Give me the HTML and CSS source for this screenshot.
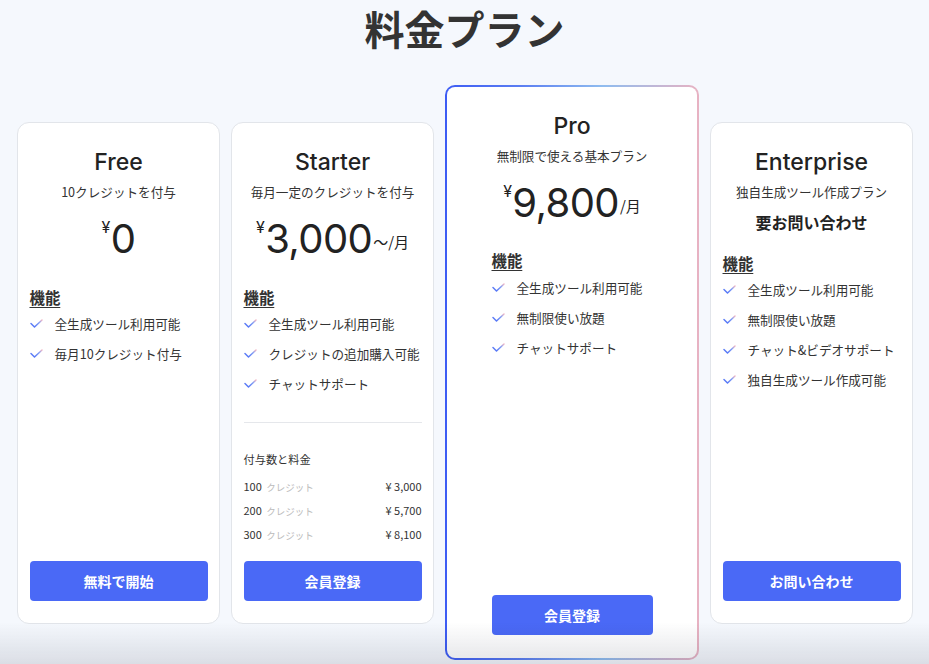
FILE: index.html
```html
<!DOCTYPE html>
<html lang="ja">
<head>
  <meta charset="UTF-8" />
  <meta name="viewport" content="width=device-width, initial-scale=1" />
  <title>料金プラン</title>
  <link rel="stylesheet" href="styles.css">
</head>
<body>
  <svg width="0" height="0" class="defs">
    <defs>
      <linearGradient id="checkGrad" x1="0" y1="1" x2="1" y2="0">
        <stop offset="0%" stop-color="#4a6cf7" />
        <stop offset="65%" stop-color="#7f9cf5" />
        <stop offset="100%" stop-color="#f0b6c4" />
      </linearGradient>
    </defs>
  </svg>

  <h1 class="page-title">料金プラン</h1>

  <div class="plans">
    <div class="card">
      <div class="plan-name">Free</div>
      <div class="plan-desc">10クレジットを付与</div>
      <div class="price"><span class="yen">¥</span>0</div>
      <div class="feat-title">機能</div>
      <ul class="features">
        <li><svg class="check" viewBox="0 0 13 9"><path d="M1 4.5 L4.5 8 L12 1" /></svg>全生成ツール利用可能</li>
        <li><svg class="check" viewBox="0 0 13 9"><path d="M1 4.5 L4.5 8 L12 1" /></svg>毎月10クレジット付与</li>
      </ul>
      <button class="btn">無料で開始</button>
    </div>

    <div class="card">
      <div class="plan-name">Starter</div>
      <div class="plan-desc">毎月一定のクレジットを付与</div>
      <div class="price"><span class="yen">¥</span>3,000<span class="unit">〜/月</span></div>
      <div class="feat-title">機能</div>
      <ul class="features">
        <li><svg class="check" viewBox="0 0 13 9"><path d="M1 4.5 L4.5 8 L12 1" /></svg>全生成ツール利用可能</li>
        <li><svg class="check" viewBox="0 0 13 9"><path d="M1 4.5 L4.5 8 L12 1" /></svg>クレジットの追加購入可能</li>
        <li><svg class="check" viewBox="0 0 13 9"><path d="M1 4.5 L4.5 8 L12 1" /></svg>チャットサポート</li>
      </ul>
      <div class="credits">
        <div class="credits-title">付与数と料金</div>
        <div class="credit-row"><span>100 <em>クレジット</em></span><span>¥ 3,000</span></div>
        <div class="credit-row"><span>200 <em>クレジット</em></span><span>¥ 5,700</span></div>
        <div class="credit-row"><span>300 <em>クレジット</em></span><span>¥ 8,100</span></div>
      </div>
      <button class="btn">会員登録</button>
    </div>

    <div class="card pro">
      <div class="plan-name">Pro</div>
      <div class="plan-desc">無制限で使える基本プラン</div>
      <div class="price"><span class="yen">¥</span>9,800<span class="unit">/月</span></div>
      <div class="feat-title">機能</div>
      <ul class="features">
        <li><svg class="check" viewBox="0 0 13 9"><path d="M1 4.5 L4.5 8 L12 1" /></svg>全生成ツール利用可能</li>
        <li><svg class="check" viewBox="0 0 13 9"><path d="M1 4.5 L4.5 8 L12 1" /></svg>無制限使い放題</li>
        <li><svg class="check" viewBox="0 0 13 9"><path d="M1 4.5 L4.5 8 L12 1" /></svg>チャットサポート</li>
      </ul>
      <button class="btn">会員登録</button>
    </div>

    <div class="card">
      <div class="plan-name">Enterprise</div>
      <div class="plan-desc">独自生成ツール作成プラン</div>
      <div class="contact">要お問い合わせ</div>
      <div class="feat-title">機能</div>
      <ul class="features">
        <li><svg class="check" viewBox="0 0 13 9"><path d="M1 4.5 L4.5 8 L12 1" /></svg>全生成ツール利用可能</li>
        <li><svg class="check" viewBox="0 0 13 9"><path d="M1 4.5 L4.5 8 L12 1" /></svg>無制限使い放題</li>
        <li><svg class="check" viewBox="0 0 13 9"><path d="M1 4.5 L4.5 8 L12 1" /></svg>チャット&amp;ビデオサポート</li>
        <li><svg class="check" viewBox="0 0 13 9"><path d="M1 4.5 L4.5 8 L12 1" /></svg>独自生成ツール作成可能</li>
      </ul>
      <button class="btn">お問い合わせ</button>
    </div>
  </div>
</body>
</html>
```

FILE: styles.css
```css
:root {
  --bg-color: #f5f8fd;
  --text-color: #2b2b2b;
  --border-color: #e2e5ea;
  --accent-color: #4a69f6;
}

* {
  box-sizing: border-box;
}

body {
  font-family: 'Noto Sans CJK JP', sans-serif;
  background-color: var(--bg-color);
  color: var(--text-color);
  margin: 0;
  padding: 0;
  min-height: 100vh;
  overflow: hidden;
}

body::after {
  content: "";
  position: fixed;
  left: 0;
  right: 0;
  bottom: 0;
  height: 42px;
  background: linear-gradient(to bottom, rgba(30, 40, 60, 0), rgba(30, 40, 60, 0.12));
  pointer-events: none;
}

.defs {
  position: absolute;
}

.page-title {
  margin: 4px 0 0;
  text-align: center;
  font-size: 40px;
  line-height: 48px;
  font-weight: 700;
  color: #333;
}

.plans {
  display: flex;
  justify-content: center;
  align-items: center;
  gap: 11px;
  margin-top: 33px;
}

.card {
  width: 203px;
  height: 502px;
  background: #fff;
  border: 1px solid var(--border-color);
  border-radius: 12px;
  padding: 24px 11px 22px 12px;
  display: flex;
  flex-direction: column;
}

.card.pro {
  width: 254px;
  height: 575px;
  border: 2px solid transparent;
  border-radius: 10px;
  background:
    linear-gradient(#fff, #fff) padding-box,
    linear-gradient(to right, #3d5cf4 0%, #5b7ef2 30%, #8fbcef 62%, #e8b2c2 100%) border-box;
  padding: 24px 44px 23px 45px;
}

.plan-name {
  font-family: 'Inter', 'Noto Sans CJK JP', sans-serif;
  text-align: center;
  font-size: 23px;
  line-height: 30px;
  font-weight: 500;
  color: #222;
}

.plan-desc {
  text-align: center;
  font-size: 12.6px;
  line-height: 18px;
  margin-top: 6px;
  color: #333;
}

.price {
  font-family: 'Inter', 'Noto Sans CJK JP', sans-serif;
  text-align: center;
  font-size: 40px;
  line-height: 50px;
  height: 50px;
  margin-top: 13px;
  color: #222;
  letter-spacing: -0.6px;
}

.yen {
  font-size: 16px;
  line-height: 1;
  vertical-align: 20px;
  margin-right: 1px;
}

.unit {
  font-family: 'Noto Sans CJK JP', sans-serif;
  font-size: 15px;
  line-height: 1;
  vertical-align: 5px;
  margin-left: 1px;
  letter-spacing: 0;
}

.contact {
  text-align: center;
  font-size: 16px;
  line-height: 24px;
  font-weight: 700;
  margin-top: 9px;
  color: #222;
}

.feat-title {
  font-size: 15.4px;
  line-height: 22px;
  font-weight: 700;
  text-decoration: underline;
  text-underline-offset: 3px;
  margin-top: 22px;
  color: #333;
}

.contact + .feat-title {
  margin-top: 18px;
}

.pro .feat-title {
  margin-top: 21px;
}

.features {
  list-style: none;
  margin: 1px 0 0;
  padding: 0;
}

.features li {
  display: flex;
  align-items: center;
  height: 30px;
  font-size: 12.6px;
  color: #333;
}

.check {
  width: 13px;
  height: 9px;
  margin-right: 12px;
  flex-shrink: 0;
  fill: none;
  stroke: url(#checkGrad);
  stroke-width: 1.5;
  stroke-linecap: round;
  stroke-linejoin: round;
}

.credits {
  margin-top: 23px;
  border-top: 1px solid #e5e7eb;
  padding-top: 27px;
}

.credits-title {
  font-size: 11.2px;
  line-height: 18px;
  margin-bottom: 6px;
  color: #333;
}

.credit-row {
  display: flex;
  justify-content: space-between;
  align-items: center;
  height: 24px;
  font-size: 11px;
  color: #333;
}

.credit-row em {
  font-style: normal;
  font-size: 9.5px;
  color: #bbb;
  margin-left: 2px;
}

.btn {
  margin-top: auto;
  height: 40px;
  width: 100%;
  border: none;
  border-radius: 4px;
  background-color: var(--accent-color);
  color: #fff;
  font-family: 'Noto Sans CJK JP', sans-serif;
  font-size: 14px;
  font-weight: 700;
  cursor: pointer;
}
```
